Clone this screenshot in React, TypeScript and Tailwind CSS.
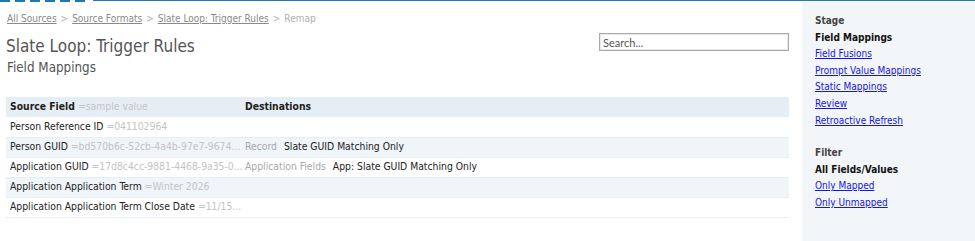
import React from "react";

const font = "font-['Tahoma','DejaVu_Sans_Condensed','Liberation_Sans',sans-serif]";

type Row = {
  field: string;
  sample: string;
  dest?: string;
  target?: string;
};

const rows: Row[] = [
  { field: "Person Reference ID", sample: "=041102964" },
  {
    field: "Person GUID",
    sample: "=bd570b6c-52cb-4a4b-97e7-9674...",
    dest: "Record",
    target: "Slate GUID Matching Only",
  },
  {
    field: "Application GUID",
    sample: "=17d8c4cc-9881-4468-9a35-0...",
    dest: "Application Fields",
    target: "App: Slate GUID Matching Only",
  },
  { field: "Application Application Term", sample: "=Winter 2026" },
  { field: "Application Application Term Close Date", sample: "=11/15..." },
];

const stageLinks = [
  "Field Fusions",
  "Prompt Value Mappings",
  "Static Mappings",
  "Review",
  "Retroactive Refresh",
];

function Crumb({ children }: { children: React.ReactNode }) {
  return <a className="text-[#8a8a8a] underline">{children}</a>;
}

function Sep() {
  return <span className="px-[4px] text-[#b5b5b5]">&gt;</span>;
}

export default function App() {
  return (
    <div className={`${font} relative h-[241px] w-[975px] overflow-hidden bg-white text-[10.3px] text-[#222]`}>
      {/* top rule */}
      <div className="flex h-[2px] w-full">
        <div className="flex w-[93px] gap-[5px]">
          {[0, 1, 2, 3, 4, 5].map((i) => (
            <div key={i} className="h-[2px] w-[10px] bg-[#1f78b4]" />
          ))}
        </div>
        <div className="h-[1px] flex-1 bg-[#1f78b4]" />
      </div>

      <div className="flex">
        <main className="w-[802px] pl-[6px] pr-[13px]">
          <div className="pt-[7px] pl-[1px] text-[10px] leading-[20px]">
            <Crumb>All Sources</Crumb>
            <Sep />
            <Crumb>Source Formats</Crumb>
            <Sep />
            <Crumb>Slate Loop: Trigger Rules</Crumb>
            <Sep />
            <span className="text-[#b0b0b0]">Remap</span>
          </div>

          <div className="flex items-start justify-between">
            <div>
              <h1 className="mt-[5px] text-[17px] leading-[24px] text-[#555]">Slate Loop: Trigger Rules</h1>
              <h2 className="pl-[1px] text-[13.3px] leading-[20px] text-[#555]">Field Mappings</h2>
            </div>
            <input
              placeholder="Search..."
              className="mt-[4px] h-[18px] w-[190px] border border-[#aaa] px-[3px] font-['Lato',sans-serif] text-[11px] text-[#333] placeholder:text-[#555] shadow-[inset_0_0_0_1px_#e8e8e8] outline-none"
            />
          </div>

          <table className="mt-[19px] w-[783px] table-fixed border-collapse text-left">
            <colgroup>
              <col className="w-[239px]" />
              <col />
            </colgroup>
            <thead>
              <tr className="h-[20px] bg-[#e6eef5]">
                <th className="px-[4px] font-bold text-[#222]">
                  Source Field <span className="font-normal text-[#c4c4c4]">=sample value</span>
                </th>
                <th className="px-0 font-bold text-[#222]">Destinations</th>
              </tr>
            </thead>
            <tbody>
              {rows.map((r, i) => (
                <tr
                  key={r.field}
                  className={`h-[20px] border-b border-[#e7eef8] ${i % 2 === 1 ? "bg-[#f0f5fa]" : "bg-white"}`}
                >
                  <td className="overflow-hidden whitespace-nowrap px-[4px] text-[#222]">
                    {r.field} <span className="text-[#c4c4c4]">{r.sample}</span>
                  </td>
                  <td className="whitespace-nowrap p-0">
                    {r.dest && (
                      <>
                        <span className="text-[#a8a8a8]">{r.dest}</span>
                        <span className="pl-[7px] text-[#222]">{r.target}</span>
                      </>
                    )}
                  </td>
                </tr>
              ))}
            </tbody>
          </table>
        </main>

        <aside className="h-[239px] flex-1 bg-[#f2f6f9] pl-[13px] pt-[11px] text-[10px] leading-[16.6px]">
          <div className="font-bold text-[#444]">Stage</div>
          <div className="font-bold text-[#111]">Field Mappings</div>
          {stageLinks.map((l) => (
            <div key={l}>
              <a className="text-[#1515e6] underline">{l}</a>
            </div>
          ))}
          <div className="mt-[16px] font-bold text-[#444]">Filter</div>
          <div className="font-bold text-[#111]">All Fields/Values</div>
          <div>
            <a className="text-[#1515e6] underline">Only Mapped</a>
          </div>
          <div>
            <a className="text-[#1515e6] underline">Only Unmapped</a>
          </div>
        </aside>
      </div>
    </div>
  );
}
